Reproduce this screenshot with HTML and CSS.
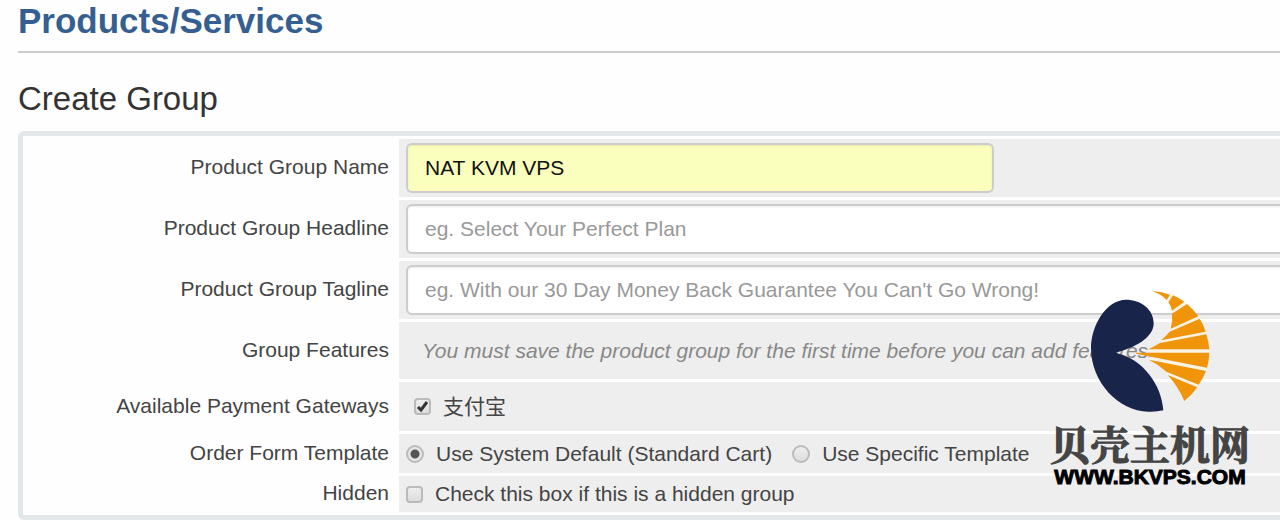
FILE: index.html
```
<!doctype html>
<html lang="en">
<head>
    <meta charset="UTF-8">
    <meta name="viewport" content="width=device-width, initial-scale=1.0">
    <title>Products/Services</title>
    <link rel="stylesheet" href="styles.css">
</head>
<body>
<main class="content">
    <h1>Products/Services</h1>
    <h2>Create Group</h2>
    <form>
        <table class="form">
            <tr>
                <th class="fieldlabel"><label for="name">Product Group Name</label></th>
                <td class="fieldarea"><input type="text" id="name" class="form-control input-name" value="NAT KVM VPS"></td>
            </tr>
            <tr>
                <th class="fieldlabel"><label for="headline">Product Group Headline</label></th>
                <td class="fieldarea"><input type="text" id="headline" class="form-control" placeholder="eg. Select Your Perfect Plan"></td>
            </tr>
            <tr>
                <th class="fieldlabel"><label for="tagline">Product Group Tagline</label></th>
                <td class="fieldarea"><input type="text" id="tagline" class="form-control" placeholder="eg. With our 30 Day Money Back Guarantee You Can't Go Wrong!"></td>
            </tr>
            <tr class="row-features">
                <th class="fieldlabel">Group Features</th>
                <td class="fieldarea"><div class="notice">You must save the product group for the first time before you can add features.</div></td>
            </tr>
            <tr class="row-gateways">
                <th class="fieldlabel">Available Payment Gateways</th>
                <td class="fieldarea">
                    <div class="options gateways">
                        <label class="option"><input type="checkbox" checked><span>支付宝</span></label>
                    </div>
                </td>
            </tr>
            <tr class="row-template">
                <th class="fieldlabel">Order Form Template</th>
                <td class="fieldarea">
                    <div class="options">
                        <label class="option"><input type="radio" name="template" checked><span>Use System Default (Standard Cart)</span></label>
                        <label class="option"><input type="radio" name="template"><span>Use Specific Template</span></label>
                    </div>
                </td>
            </tr>
            <tr class="row-hidden">
                <th class="fieldlabel"><label for="hidden">Hidden</label></th>
                <td class="fieldarea">
                    <div class="options">
                        <label class="option"><input type="checkbox" id="hidden"><span>Check this box if this is a hidden group</span></label>
                    </div>
                </td>
            </tr>
        </table>
    </form>
</main>
<div class="watermark">
    <svg class="logo" viewBox="0 0 420 405" aria-hidden="true">
        <path fill="#18244a" d="M107 203C160 190 221 160 221 115C221 72 182 44 138 44C80 44 33 120 33 190C33 290 115 380 205 380Q230 381 250 376C245 300 190 222 107 203Z"/>
        <g stroke="#fdf3e2" stroke-width="9">
            <path d="M262 47L273 31"/>
            <path d="M277 81L316 54"/>
            <path d="M272 134L356 98"/>
            <path d="M243 170L377 144"/>
            <path d="M205 198H388"/>
            <path d="M207 219L378 254"/>
            <path d="M262 266L354 304"/>
        </g>
        <g fill="#f0940a">
            <path d="M217 18Q246 20 270 29L260 45Q246 29 217 18Z"/>
            <path d="M279 31Q298 39 313 50L276 77Q273 62 265 52Z"/>
            <path d="M321 57Q341 74 355 94L272 131Q279 108 276 86Z"/>
            <path d="M359 101Q371 119 377 140L243 166Q259 153 269 140Z"/>
            <path d="M379 148Q386 170 388 193H205Q224 184 240 174Z"/>
            <path d="M388 203Q387 227 381 248L168 206V203Z"/>
            <path d="M378 258Q369 281 356 299L259 260Q237 239 207 224Z"/>
            <path d="M352 307Q335 331 313 348Q295 305 263 270Z"/>
        </g>
    </svg>
    <div class="brand" lang="zh-CN">贝壳主机网</div>
    <div class="site">WWW.BKVPS.COM</div>
</div>
</body>
</html>
```
FILE: styles.css
```
* {
    box-sizing: border-box;
}

body {
    margin: 0;
    background: #fefefe;
    color: #444;
    font-family: "Liberation Sans", "Noto Sans CJK SC", sans-serif;
    font-size: 21px;
    overflow: hidden;
}

.content {
    margin: 0 -40px 0 18px;
}

h1 {
    margin: 0;
    padding-bottom: 9px;
    border-bottom: 2px solid #ccc;
    color: #365f91;
    font-size: 35px;
    line-height: 42px;
}

h2 {
    margin: 26px 0 12px;
    color: #333;
    font-size: 33px;
    font-weight: normal;
    line-height: 40px;
}

.form {
    width: 100%;
    padding: 0;
    border: 5px solid #e2e7e9;
    border-radius: 6px;
    border-spacing: 3px;
    table-layout: fixed;
    background: #fefefe;
}

.fieldlabel {
    width: 370px;
    padding: 0 7px 2px 0;
    font-weight: normal;
    text-align: right;
    line-height: 24px;
}

.fieldarea {
    padding: 4px 7px;
    background: #eee;
}

.form-control {
    display: block;
    width: 100%;
    height: 50px;
    padding: 0 17px;
    border: 2px solid #ccc;
    border-radius: 6px;
    background: #fff;
    box-shadow: inset 0 1px 2px rgba(0, 0, 0, 0.08);
    color: #111;
    font-family: inherit;
    font-size: 21px;
}

.form-control::placeholder {
    color: #999;
}

.input-name {
    width: 588px;
    background: #faffbd;
}

.row-features {
    height: 57px;
}

.row-gateways {
    height: 49px;
}

.row-template {
    height: 39px;
}

.row-hidden {
    height: 36px;
}

.notice {
    padding-left: 16px;
    color: #888;
    font-style: italic;
    line-height: 24px;
    white-space: nowrap;
}

.options {
    display: flex;
    gap: 20px;
    line-height: 24px;
}

.gateways {
    padding-left: 8px;
}

.option {
    display: flex;
    align-items: center;
    gap: 12px;
}

input[type="checkbox"],
input[type="radio"] {
    flex: none;
    width: 17px;
    height: 17px;
    margin: 0;
    border: 2px solid #bbb;
    border-radius: 4px;
    background: linear-gradient(#eee, #ddd);
    appearance: none;
}

input[type="radio"] {
    width: 18px;
    height: 18px;
    border-radius: 50%;
}

input[type="checkbox"]:checked {
    background: url("data:image/svg+xml,%3Csvg xmlns='http://www.w3.org/2000/svg' viewBox='0 0 13 13'%3E%3Cpath d='M2 7l3 3 6-8' fill='none' stroke='%23333' stroke-width='3'/%3E%3C/svg%3E"), linear-gradient(#eee, #ddd);
}

input[type="radio"]:checked {
    background: radial-gradient(circle, #555 4px, #e6e6e6 5px);
}

/* logo printed over the corner of the page */
.watermark {
    position: absolute;
    top: 285px;
    right: 25px;
    width: 210px;
    text-align: center;
    white-space: nowrap;
}

.logo {
    display: block;
    width: 140px;
    height: 135px;
    margin: 0 auto;
}

.brand {
    color: #444;
    font-family: "Noto Serif CJK SC", "Noto Sans CJK SC", serif;
    font-size: 40px;
    font-weight: bold;
    line-height: 45px;
    -webkit-text-stroke: 1px #444;
}

.site {
    color: #000;
    font-size: 21px;
    font-weight: bold;
    line-height: 24px;
    -webkit-text-stroke: 1px #000;
}
```
